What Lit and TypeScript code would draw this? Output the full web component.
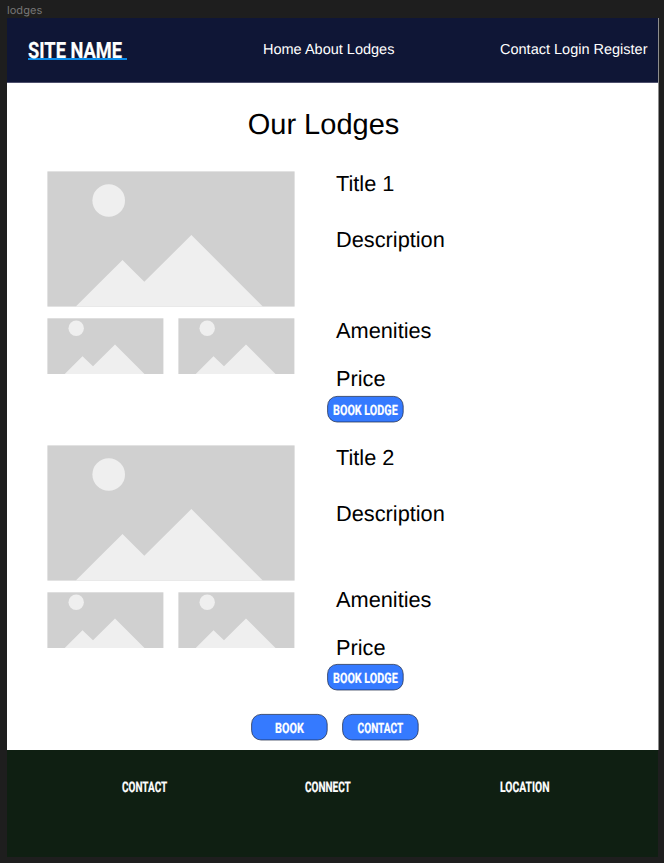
import { LitElement, html, svg, css } from "lit";
import { customElement, property } from "lit/decorators.js";

/** Bold caps squeezed to a fixed width; size is the font size in px. */
@customElement("narrow-label")
class NarrowLabel extends LitElement {
  @property() text = "";
  @property({ type: Number }) width = 50;
  @property({ type: Number }) size = 15;
  static styles = css`
    :host { display: block; flex: none; }
    svg { display: block; overflow: visible; }
    text { font-family: Roboto, "Liberation Sans", sans-serif; font-weight: 700; fill: #fff; stroke: #fff; stroke-width: 0.2; }
  `;
  render() {
    const cap = this.size * 0.711;
    return html`<svg width=${this.width} height=${cap}>
      ${svg`<text x="0" y=${cap} font-size=${this.size} textLength=${this.width} lengthAdjust="spacingAndGlyphs">${this.text}</text>`}
    </svg>`;
  }
}

@customElement("pill-button")
class PillButton extends LitElement {
  @property() text = "";
  @property({ type: Number }) width = 64;
  static styles = css`
    :host { display: block; width: 76.4px; height: 26.4px; }
    svg { display: block; overflow: visible; }
    rect { fill: #357aff; stroke: #17233f; stroke-width: 0.7; }
    text { font-family: Roboto, "Liberation Sans", sans-serif; font-weight: 700; font-size: 14.4px; fill: #fff; stroke: #fff; stroke-width: 0.2; }
  `;
  render() {
    return html`<svg width="76.4" height="26.4" role="button">
      ${svg`<rect x="0.6" y="0.4" width="75.6" height="25.6" rx="9.5"></rect>
      <text x=${(76.8 - this.width) / 2} y="18.6" textLength=${this.width} lengthAdjust="spacingAndGlyphs">${this.text}</text>`}
    </svg>`;
  }
}

@customElement("lodge-card")
class LodgeCard extends LitElement {
  @property() name = "";
  static styles = css`
    :host { display: flex; }
    svg { display: block; }
    .gallery { width: 248px; display: grid; gap: 11px; align-content: start; }
    .thumbs { display: flex; justify-content: space-between; }
    .sky { fill: #d0d0d0; }
    .shape { fill: #efefef; }
    .info { margin-left: 32px; display: flex; flex-direction: column; font-size: 21.75px; line-height: 26px; }
    .info div { padding-left: 9px; height: 26px; }
    .description { margin-top: 30px; }
    .amenities { margin-top: var(--amenities-gap, 65px); }
    .price { margin-top: 22px; }
    pill-button { margin-top: var(--button-gap, 4.4px); margin-left: 0; }
  `;
  thumb() {
    return html`<svg width="117" height="57">
      <rect class="sky" x="0.4" y="0.3" width="116" height="55.7"></rect>
      <circle class="shape" cx="29.2" cy="10.2" r="7.7"></circle>
      <path class="shape" d="M17.7 56 35.5 38.2 46 48.3 68 26.6 97.5 56Z"></path>
    </svg>`;
  }
  render() {
    return html`
      <div class="gallery">
        <svg width="248" height="136">
          <rect class="sky" x="0.4" y="0.4" width="247.2" height="135.2"></rect>
          <circle class="shape" cx="61.7" cy="29.5" r="16.3"></circle>
          <path class="shape" d="M28.8 135.6 75.5 89 97.3 110.8 144.4 64 215.8 135.6Z"></path>
        </svg>
        <div class="thumbs">${this.thumb()}${this.thumb()}</div>
      </div>
      <div class="info">
        <div>${this.name}</div>
        <div class="description">Description</div>
        <div class="amenities">Amenities</div>
        <div class="price">Price</div>
        <pill-button text="BOOK LODGE" width="64.6"></pill-button>
      </div>`;
  }
}

@customElement("app-root")
class AppRoot extends LitElement {
  static styles = css`
    :host {
      display: block; box-sizing: border-box; width: 664px; height: 863px; overflow: hidden;
      padding: 0 5px 0 7px; background: #1e1e1e; color: #000;
      font-family: "Liberation Sans", Arial, sans-serif; text-rendering: geometricPrecision;
    }
    .caption { height: 18px; font: 11px/20px Inter, sans-serif; letter-spacing: 0.05px; color: #777; }
    .frame { width: 652px; height: 838.6px; display: flex; flex-direction: column; }
    .top { border-right: 1px solid #8d8d8d; background: #fff; }
    header {
      height: 64px; background: #0f1636; color: #fff; border-bottom: 1px solid #4d4f6c;
      display: grid; grid-template-columns: 235px 237px 1fr; padding-left: 21px;
      font-size: 14.5px; line-height: 18px; white-space: nowrap;
    }
    .brand { margin-top: 24px; width: 99px; height: 15.9px; border-bottom: 2px solid #0a8ceb; }
    nav { margin-top: 23px; }
    h1 { margin: 0; padding-top: 24px; padding-right: 18px; text-align: center; font-size: 29px; line-height: 36px; font-weight: 400; }
    .lodges { padding: 28px 0 0 40px; display: flex; flex-direction: column; }
    lodge-card { height: 274px; }
    .second { height: 244px; --amenities-gap: 60px; --button-gap: 2.6px; }
    .actions { height: 61px; padding: 25.2px 0 0 244px; box-sizing: border-box; display: flex; gap: 14.2px; }
    footer {
      flex: 1; background: #0f1f12; margin-right: 1px; display: grid;
      grid-template-columns: 182.2px 195.9px 1fr; padding: 32.3px 0 0 115.4px;
    }
  `;
  render() {
    return html`
      <div class="caption">lodges</div>
      <div class="frame">
        <div class="top">
          <header>
            <div class="brand"><narrow-label text="SITE NAME" width="94" size="22.4"></narrow-label></div>
            <nav>Home About Lodges</nav>
            <nav>Contact Login Register</nav>
          </header>
          <h1>Our Lodges</h1>
          <div class="lodges">
            <lodge-card name="Title 1"></lodge-card>
            <lodge-card class="second" name="Title 2"></lodge-card>
          </div>
          <div class="actions">
            <pill-button text="BOOK" width="28.8"></pill-button>
            <pill-button text="CONTACT" width="45.6"></pill-button>
          </div>
        </div>
        <footer>
          <narrow-label text="CONTACT" width="45.3" size="14.6"></narrow-label>
          <narrow-label text="CONNECT" width="45.8" size="14.6"></narrow-label>
          <narrow-label text="LOCATION" width="49.5" size="14.6"></narrow-label>
        </footer>
      </div>`;
  }
}
